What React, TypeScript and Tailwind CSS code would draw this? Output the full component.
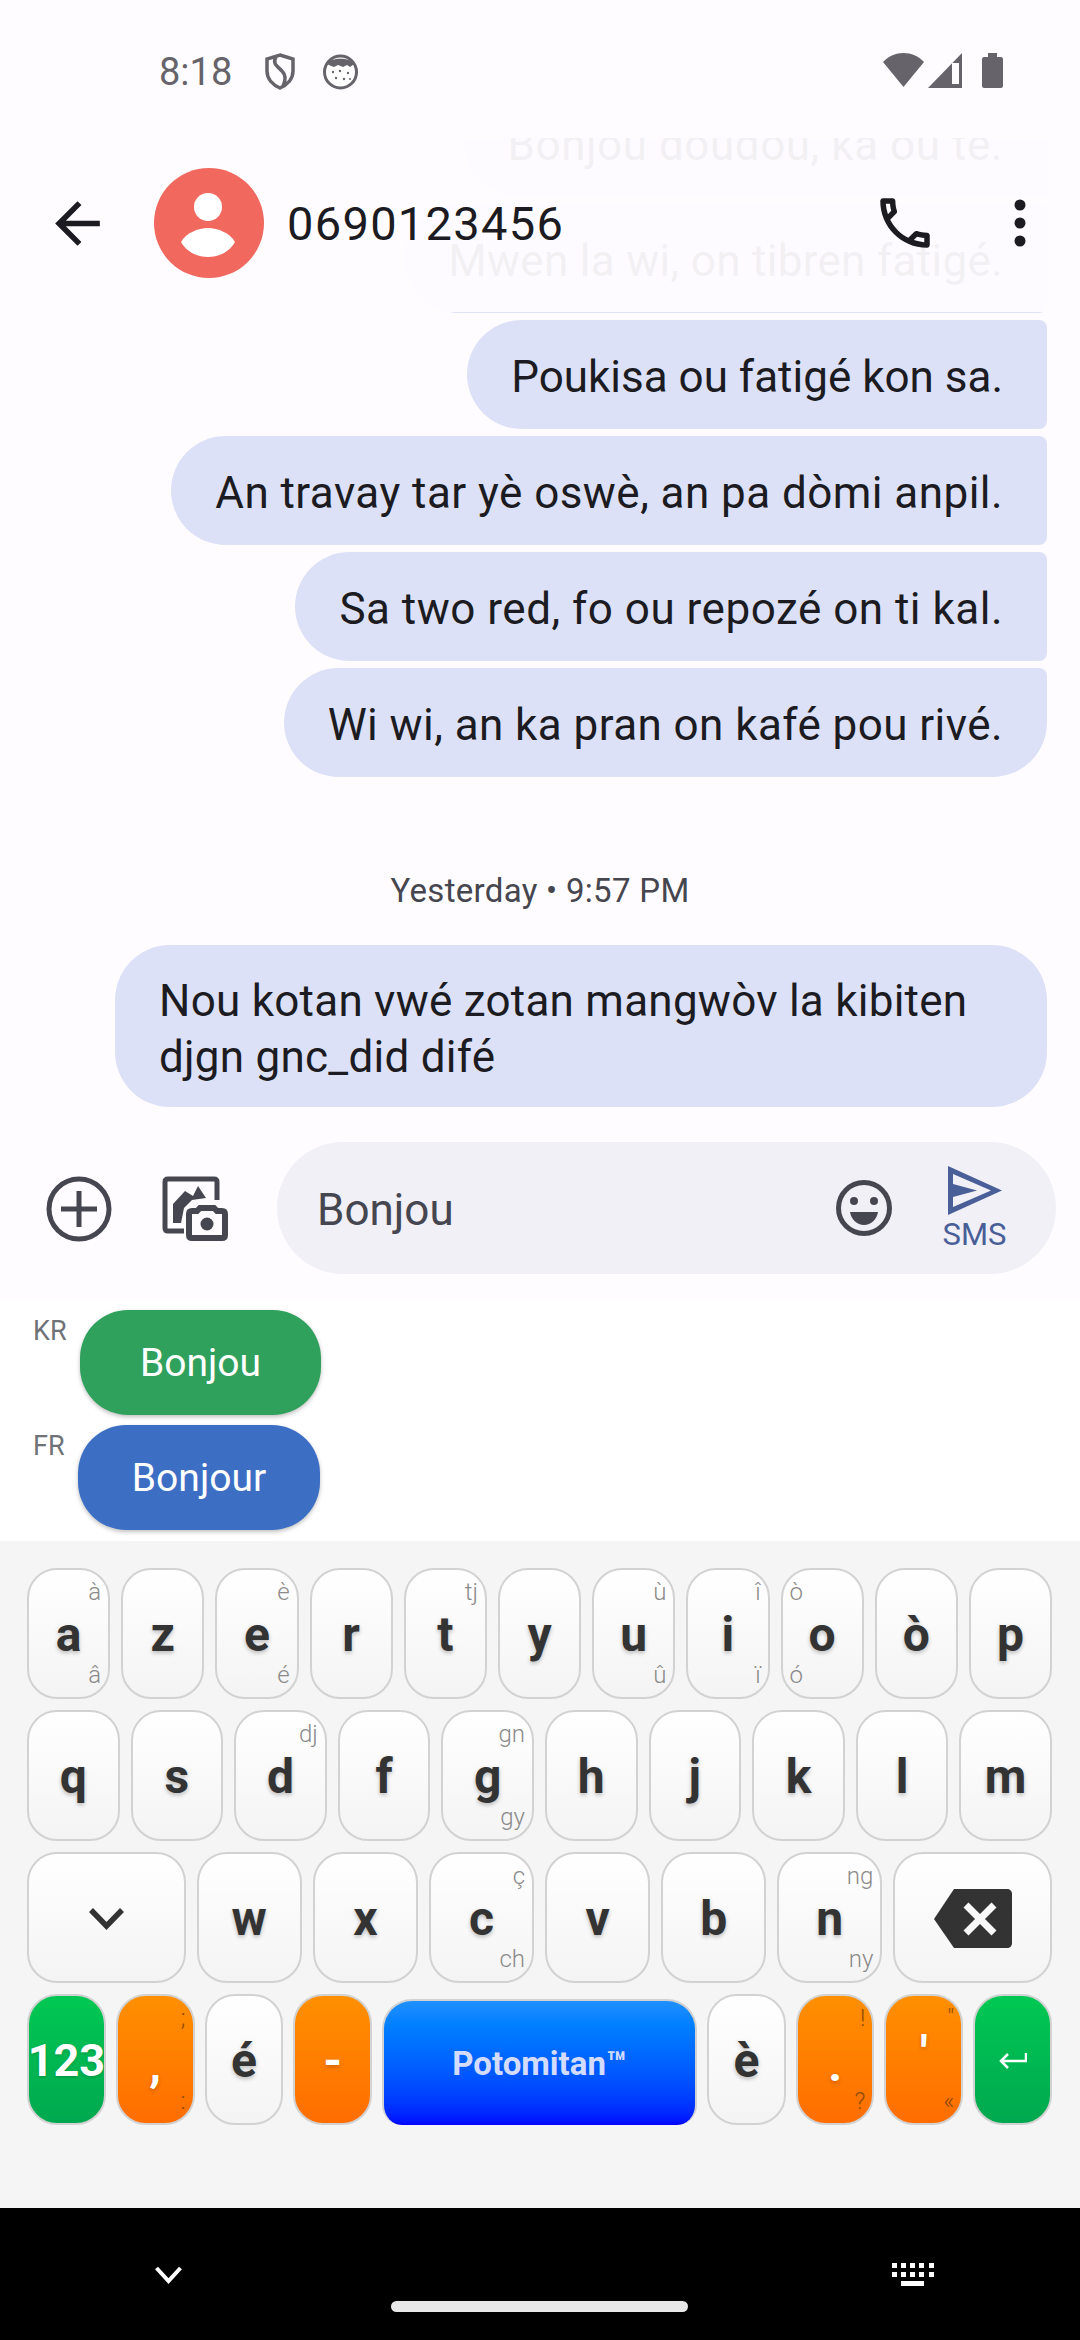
import clsx from 'clsx';

interface KeyProps {
  label?: string;
  tl?: string;
  tr?: string;
  bl?: string;
  br?: string;
  kind?: 'white' | 'orange' | 'green';
  wide?: boolean;
  children?: React.ReactNode;
}

function Key({ label, tl, tr, bl, br, kind = 'white', wide, children }: KeyProps) {
  const hint = kind === 'orange' ? 'text-[#8f4a08]' : 'text-[#8a8a8a]';
  return (
    <div
      className={clsx(
        'relative flex h-[131px] min-w-0 items-center justify-center overflow-hidden rounded-[30px] border-2 border-[#d2d2d2] pt-[2px] text-[48px] font-bold',
        wide ? 'flex-[1.53]' : 'flex-1',
        kind === 'white' && 'bg-gradient-to-b from-white to-[#f4f4f4] text-[#333333] [text-shadow:0_2px_4px_rgba(0,0,0,0.25)]',
        kind === 'orange' && 'bg-gradient-to-b from-[#ff8f00] to-[#ff6d00] text-white [text-shadow:0_2px_4px_rgba(0,0,0,0.2)]',
        kind === 'green' && 'bg-gradient-to-b from-[#00c853] to-[#00a84f] text-white [text-shadow:0_1px_3px_rgba(0,0,0,0.2)]'
      )}
    >
      {label}
      {children}
      {tl && <span className={clsx('absolute left-[7px] top-[4px] text-[24px] font-light leading-[36px] [text-shadow:none]', hint)}>{tl}</span>}
      {tr && <span className={clsx('absolute right-[7px] top-[4px] text-[24px] font-light leading-[36px] [text-shadow:none]', hint)}>{tr}</span>}
      {bl && <span className={clsx('absolute bottom-[4px] left-[7px] text-[24px] font-light leading-[36px] [text-shadow:none]', hint)}>{bl}</span>}
      {br && <span className={clsx('absolute bottom-[4px] right-[7px] text-[24px] font-light leading-[36px] [text-shadow:none]', hint)}>{br}</span>}
    </div>
  );
}

function Bubble({ text, last, tracking }: { text: string; last?: boolean; tracking?: string }) {
  return (
    <div
      className={clsx(
        'flex h-[109px] shrink-0 items-center rounded-l-[55px] bg-[#dde1f7] px-[44px] pt-[5px] text-[44px] text-[#1b1b21]',
        last ? 'rounded-tr-[8px] rounded-br-[55px]' : 'rounded-r-[8px]',
        tracking
      )}
    >
      {text}
    </div>
  );
}

function StatusBar() {
  return (
    <div className="flex h-[138px] shrink-0 items-start pl-[159px] pr-[77px] pt-[48px] text-[#66646a]">
      <span className="text-[38px] leading-[48px]">8:18</span>
      <svg className="ml-[33px] mt-[5px]" width="30" height="37" viewBox="0 0 30 37" fill="none" stroke="currentColor" strokeWidth="3.5">
        <path d="M15 2 L28 6 V18 C28 26 22 32 15 35 C8 32 2 26 2 18 V6 Z" />
        <path d="M11 4 C7 10 12 13 17 18 C21 22 21 27 18 33" />
      </svg>
      <svg className="ml-[28px] mt-[6px]" width="35" height="36" viewBox="0 0 35 36">
        <circle cx="17.5" cy="18" r="16" fill="#fff" stroke="currentColor" strokeWidth="3" />
        <path d="M4 10 C8 3 27 3 31 10 L27 13 L24 11 L20 13 L15 11 L11 13 L8 12 Z" fill="currentColor" />
        <g fill="currentColor">
          <circle cx="10" cy="18" r="1.2" />
          <circle cx="17" cy="17" r="1.2" />
          <circle cx="25" cy="19" r="1.2" />
          <circle cx="13" cy="24" r="1.2" />
          <circle cx="21" cy="25" r="1.2" />
          <circle cx="27" cy="25" r="1" />
        </g>
      </svg>
      <div className="ml-auto mt-[5px] flex items-start">
        <svg width="41" height="34" viewBox="0 0 41 34" fill="currentColor">
          <path d="M0 9 C11 -3 30 -3 41 9 L20.5 34 Z" />
        </svg>
        <svg className="ml-[4px]" width="34" height="35" viewBox="0 0 34 35">
          <path d="M34 0 V35 H0 Z" fill="currentColor" />
          <path d="M24 10 H31 V31 H24 Z" fill="#fefcff" />
        </svg>
        <svg className="ml-[20px]" width="21" height="35" viewBox="0 0 21 35" fill="currentColor">
          <path d="M6 0 H15 V4 H19 C20 4 21 5 21 6 V33 C21 34 20 35 19 35 H2 C1 35 0 34 0 33 V6 C0 5 1 4 2 4 H6 Z" />
        </svg>
      </div>
    </div>
  );
}

function ConversationHeader() {
  return (
    <div className="absolute left-0 right-0 top-[138px] flex h-[174px] items-center bg-[#fefcff]/95 pb-[4px] pl-[44px] text-[#1b1b21]">
      <svg width="67" height="67" viewBox="0 0 24 24" fill="currentColor">
        <path d="M20 11H7.83l5.59-5.59L12 4l-8 8 8 8 1.41-1.41L7.83 13H20v-2z" />
      </svg>
      <svg className="ml-[43px]" width="110" height="110" viewBox="0 0 110 110">
        <circle cx="55" cy="55" r="55" fill="#f0685e" />
        <ellipse cx="54" cy="39" rx="14" ry="14" fill="#fff" />
        <path d="M27 74 C32 65 44 60 54 60 S76 65 81 74 C76 83 66 89 54 89 S32 83 27 74Z" fill="#fff" />
      </svg>
      <span className="ml-[23px] pt-[2px] text-[47px] tracking-[1.3px]">0690123456</span>
      <svg className="ml-auto" width="66" height="66" viewBox="0 0 24 24" fill="currentColor">
        <path d="M6.54 5c.06.89.21 1.76.45 2.59l-1.2 1.2c-.41-1.2-.67-2.47-.76-3.79h1.51m9.86 12.02c.85.24 1.72.39 2.6.45v1.49c-1.32-.09-2.59-.35-3.8-.75l1.2-1.19M7.5 3H4c-.55 0-1 .45-1 1 0 9.39 7.61 17 17 17 .55 0 1-.45 1-1v-3.49c0-.55-.45-1-1-1-1.24 0-2.45-.2-3.57-.57-.1-.04-.21-.05-.31-.05-.26 0-.51.1-.71.29l-2.2 2.2c-2.83-1.45-5.15-3.76-6.59-6.59l2.2-2.2c.28-.28.36-.67.25-1.02C8.7 6.45 8.5 5.25 8.5 4c0-.55-.45-1-1-1z" />
      </svg>
      <svg className="ml-[76px] mr-[54px]" width="12" height="48" viewBox="0 0 12 48" fill="currentColor">
        <circle cx="6" cy="6" r="5.5" />
        <circle cx="6" cy="24" r="5.5" />
        <circle cx="6" cy="42" r="5.5" />
      </svg>
    </div>
  );
}

function ComposeRow() {
  return (
    <div className="flex h-[179px] shrink-0 items-center pb-[4px] pl-[46px] pr-[24px] text-[#45464f]">
      <svg className="mt-[3px]" width="66" height="66" viewBox="0 0 66 66" fill="none" stroke="currentColor" strokeWidth="5">
        <circle cx="33" cy="33" r="30" />
        <path d="M33 15 V51 M15 33 H51" />
      </svg>
      <svg className="ml-[50px] mt-[3px]" width="66" height="66" viewBox="0 0 66 66">
        <path d="M55 24 V6 C55 4 54 3 52 3 H6 C4 3 3 4 3 6 V52 C3 54 4 55 6 55 H22" fill="none" stroke="currentColor" strokeWidth="5" />
        <polygon points="11,47 11,28 23,15 31,20 36,10 44,22 30,24 22,32 19,47" fill="currentColor" />
        <path d="M27 38 C27 36 28 35 30 35 H35 L38 32 H52 L55 35 H60 C62 35 63 36 63 38 V59 C63 61 62 62 60 62 H30 C28 62 27 61 27 59 Z" fill="#fefcff" stroke="currentColor" strokeWidth="6" />
        <circle cx="45" cy="48" r="6.5" fill="currentColor" />
      </svg>
      <div className="ml-[49px] flex h-[132px] flex-1 items-center rounded-[66px] bg-[#f0f0f6] pl-[40px] pr-[49px]">
        <span className="pt-[5px] text-[44px]">Bonjou</span>
        <svg className="ml-auto mt-[1px]" width="56" height="56" viewBox="0 0 56 56">
          <circle cx="28" cy="28" r="25.5" fill="none" stroke="currentColor" strokeWidth="5" />
          <circle cx="18" cy="21" r="4" fill="currentColor" />
          <circle cx="38" cy="21" r="4" fill="currentColor" />
          <path d="M14 32 H42 C41 39 35 45 28 45 C21 45 15 39 14 32 Z" fill="currentColor" />
        </svg>
        <div className="ml-[50px] mt-[3px] flex w-[65px] flex-col items-center text-[#4a5f98]">
          <svg width="54" height="49" viewBox="0 0 54 49" fill="currentColor">
            <path fillRule="evenodd" d="M0 0 L54 24.5 L0 49 Z M5 8 L43 24.5 L5 41 L5 31 L29 24.5 L5 18 Z" />
          </svg>
          <span className="mt-[2px] text-[31px] leading-[36px]">SMS</span>
        </div>
      </div>
    </div>
  );
}

function Suggestions() {
  return (
    <div className="flex h-[242px] shrink-0 flex-col gap-[10px] bg-white pl-[33px] pt-[11px]">
      <div className="flex items-start">
        <span className="w-[47px] pt-[5px] text-[27px] leading-[32px] text-[#6f7378]">KR</span>
        <div className="flex h-[105px] w-[241px] items-center justify-center rounded-[48px] bg-[#2fa15d] pt-[2px] text-[39px] text-white shadow-[0_2px_4px_rgba(0,0,0,0.25)]">Bonjou</div>
      </div>
      <div className="flex items-start">
        <span className="w-[45px] pt-[5px] text-[27px] leading-[32px] text-[#6f7378]">FR</span>
        <div className="flex h-[105px] w-[242px] items-center justify-center rounded-[48px] bg-[#3c6fc4] pt-[2px] text-[39px] text-white shadow-[0_2px_4px_rgba(0,0,0,0.25)]">Bonjour</div>
      </div>
    </div>
  );
}

function Keyboard() {
  return (
    <div className="flex h-[667px] shrink-0 flex-col gap-[11px] bg-[#f5f5f5] pl-[27px] pr-[28px] pt-[27px]">
      <div className="flex gap-[11px]">
        <Key label="a" tr="à" br="â" />
        <Key label="z" />
        <Key label="e" tr="è" br="é" />
        <Key label="r" />
        <Key label="t" tr="tj" />
        <Key label="y" />
        <Key label="u" tr="ù" br="û" />
        <Key label="i" tr="î" br="ï" />
        <Key label="o" tl="ò" bl="ó" />
        <Key label="ò" />
        <Key label="p" />
      </div>
      <div className="flex gap-[11px]">
        <Key label="q" />
        <Key label="s" />
        <Key label="d" tr="dj" />
        <Key label="f" />
        <Key label="g" tr="gn" br="gy" />
        <Key label="h" />
        <Key label="j" />
        <Key label="k" />
        <Key label="l" />
        <Key label="m" />
      </div>
      <div className="flex gap-[11px]">
        <Key wide>
          <svg width="37" height="24" viewBox="0 0 37 24" fill="none" stroke="#333333" strokeWidth="5.5">
            <path d="M3 3 L18.5 19 L34 3" />
          </svg>
        </Key>
        <Key label="w" />
        <Key label="x" />
        <Key label="c" tr="ç" br="ch" />
        <Key label="v" />
        <Key label="b" />
        <Key label="n" tr="ng" br="ny" />
        <Key wide>
          <svg width="78" height="59" viewBox="0 0 78 59">
            <path d="M20 0 H73 C76 0 78 2 78 5 V54 C78 57 76 59 73 59 H20 L0 30 Z" fill="#333333" />
            <path d="M32 16 L60 44 M60 16 L32 44" stroke="#f8f8f8" strokeWidth="7" fill="none" />
          </svg>
        </Key>
      </div>
      <div className="flex gap-[10px]">
        <Key kind="green">
          <span className="text-[45px]">123</span>
        </Key>
        <Key kind="orange" tr=";" br=":">
          <span className="mt-[8px]">,</span>
        </Key>
        <Key label="é" />
        <Key label="-" kind="orange" />
        <div className="mt-[5px] flex h-[126px] min-w-0 flex-[4.16] items-center justify-center rounded-t-[30px] rounded-b-[20px] border-x-2 border-t-2 border-[#d2d2d2] bg-gradient-to-b from-[#2090ff] to-[#0000ff] pt-[2px] text-[33px] font-bold text-[#d3dcff]">
          Potomitan™
        </div>
        <Key label="è" />
        <Key kind="orange" tr="!" br="?">
          <span className="mt-[8px]">.</span>
        </Key>
        <Key kind="orange" tr={'"'} br="«">
          <span className="-mt-[14px]">'</span>
        </Key>
        <Key kind="green">
          <svg width="28" height="18" viewBox="0 0 28 18" fill="none" stroke="#ffffff" strokeWidth="2.5">
            <path d="M27 1 V9 H2 M9 2 L2 9 L9 16" />
          </svg>
        </Key>
      </div>
    </div>
  );
}

function NavBar() {
  return (
    <div className="relative flex h-[132px] shrink-0 items-start justify-between bg-black pl-[155px] pr-[146px] pt-[55px]">
      <svg className="mt-[3px]" width="27" height="18" viewBox="0 0 27 18" fill="none" stroke="#ffffff" strokeWidth="4">
        <path d="M1.5 2 L13.5 15 L25.5 2" />
      </svg>
      <svg width="42" height="23" viewBox="0 0 42 23" fill="#ffffff">
        <rect x="0" y="0" width="5" height="5" />
        <rect x="9" y="0" width="5" height="5" />
        <rect x="18" y="0" width="5" height="5" />
        <rect x="27" y="0" width="5" height="5" />
        <rect x="37" y="0" width="5" height="5" />
        <rect x="0" y="9" width="5" height="5" />
        <rect x="9" y="9" width="5" height="5" />
        <rect x="18" y="9" width="5" height="5" />
        <rect x="27" y="9" width="5" height="5" />
        <rect x="37" y="9" width="5" height="5" />
        <rect x="9" y="18" width="23" height="5" />
      </svg>
      <div className="absolute left-[391px] top-[93px] h-[11px] w-[297px] rounded-full bg-[#e8e8e8]" />
    </div>
  );
}

export default function App() {
  return (
    <div className="relative flex h-[2340px] w-[1080px] flex-col overflow-hidden bg-[#fefcff] [font-family:Roboto,sans-serif]">
      <StatusBar />
      <div className="flex h-[982px] shrink-0 flex-col items-end justify-end gap-[7px] overflow-hidden pb-[13px] pr-[33px]">
        <Bubble text="Bonjou doudou, ka ou te." tracking="tracking-[0.55px]" />
        <Bubble text="Mwen la wi, on tibren fatigé." tracking="tracking-[0.3px]" />
        <Bubble text="Poukisa ou fatigé kon sa." />
        <Bubble text="An travay tar yè oswè, an pa dòmi anpil." tracking="tracking-[0.45px]" />
        <Bubble text="Sa two red, fo ou repozé on ti kal." tracking="tracking-[0.5px]" />
        <Bubble text="Wi wi, an ka pran on kafé pou rivé." tracking="tracking-[0.43px]" last />
        <div className="mb-[26px] mt-[84px] flex h-[44px] w-[1014px] shrink-0 items-center justify-center pt-[2px] text-[33px] tracking-[0.3px] text-[#46464f]">
          Yesterday • 9:57 PM
        </div>
        <div className="h-[162px] w-[932px] shrink-0 rounded-[55px] bg-[#dde1f7] px-[44px] py-[28px] text-[44px] leading-[56px] tracking-[0.25px] text-[#1b1b21]">
          Nou kotan vwé zotan mangwòv la kibiten
          <br />
          djgn gnc_did difé
        </div>
      </div>
      <ConversationHeader />
      <ComposeRow />
      <Suggestions />
      <Keyboard />
      <NavBar />
    </div>
  );
}
